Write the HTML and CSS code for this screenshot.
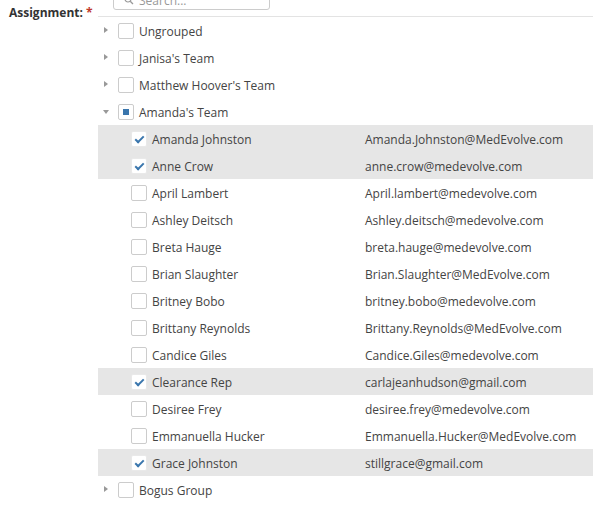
FILE: index.html
```html
<!DOCTYPE html>
<html lang="en">
<head>
    <meta charset="UTF-8">
    <title>Assignment</title>
    <link rel="stylesheet" href="styles.css">
</head>
<body>
<div class="field">
    <div class="field-label">Assignment: <span class="req">*</span></div>
    <div class="picker">
        <div class="search-wrap">
            <div class="search-box">
                <svg class="search-icon" width="10" height="10" viewBox="0 0 10 10"><circle cx="4" cy="4" r="3" fill="none" stroke="#999" stroke-width="1.2"/><path d="M6.2 6.2 L9 9" stroke="#999" stroke-width="1.3"/></svg>
                <span>Search...</span>
            </div>
        </div>
        <ul class="tree">
            <li class="group"><span class="arrow"></span><span class="check"></span><span class="name">Ungrouped</span></li>
            <li class="group"><span class="arrow"></span><span class="check"></span><span class="name">Janisa's Team</span></li>
            <li class="group"><span class="arrow"></span><span class="check"></span><span class="name">Matthew Hoover's Team</span></li>
            <li class="group open"><span class="arrow"></span><span class="check partial"></span><span class="name">Amanda's Team</span></li>
            <li class="member selected"><span class="check on"></span><span class="name">Amanda Johnston</span><span class="mail">Amanda.Johnston@MedEvolve.com</span></li>
            <li class="member selected"><span class="check on"></span><span class="name">Anne Crow</span><span class="mail">anne.crow@medevolve.com</span></li>
            <li class="member"><span class="check"></span><span class="name">April Lambert</span><span class="mail">April.lambert@medevolve.com</span></li>
            <li class="member"><span class="check"></span><span class="name">Ashley Deitsch</span><span class="mail">Ashley.deitsch@medevolve.com</span></li>
            <li class="member"><span class="check"></span><span class="name">Breta Hauge</span><span class="mail">breta.hauge@medevolve.com</span></li>
            <li class="member"><span class="check"></span><span class="name">Brian Slaughter</span><span class="mail">Brian.Slaughter@MedEvolve.com</span></li>
            <li class="member"><span class="check"></span><span class="name">Britney Bobo</span><span class="mail">britney.bobo@medevolve.com</span></li>
            <li class="member"><span class="check"></span><span class="name">Brittany Reynolds</span><span class="mail">Brittany.Reynolds@MedEvolve.com</span></li>
            <li class="member"><span class="check"></span><span class="name">Candice Giles</span><span class="mail">Candice.Giles@medevolve.com</span></li>
            <li class="member selected"><span class="check on"></span><span class="name">Clearance Rep</span><span class="mail">carlajeanhudson@gmail.com</span></li>
            <li class="member"><span class="check"></span><span class="name">Desiree Frey</span><span class="mail">desiree.frey@medevolve.com</span></li>
            <li class="member"><span class="check"></span><span class="name">Emmanuella Hucker</span><span class="mail">Emmanuella.Hucker@MedEvolve.com</span></li>
            <li class="member selected"><span class="check on"></span><span class="name">Grace Johnston</span><span class="mail">stillgrace@gmail.com</span></li>
            <li class="group"><span class="arrow"></span><span class="check"></span><span class="name">Bogus Group</span></li>
        </ul>
    </div>
</div>
</body>
</html>
```

FILE: styles.css
```css
body,ul,li{
    padding: 0;
    margin: 0;
}
ul{
    list-style: none;
}
body{
    font-family: "Open Sans", "Noto Sans", sans-serif;
    font-size: 12px;
    color: #444;
    background: #fff;
}
.field{
    display: flex;
}
.field-label{
    width: 98px;
    padding: 4px 0 0 9px;
    font-weight: bold;
    color: #333;
    box-sizing: border-box;
}
.req{
    color: #c0392b;
}
.picker{
    flex: 1;
}
.search-wrap{
    height: 16px;
    border-bottom: 1px solid #e3e3e3;
    padding-left: 15px;
    overflow: hidden;
}
.search-box{
    width: 157px;
    height: 20px;
    margin-top: -10px;
    border: 1px solid #ccc;
    border-radius: 3px;
    display: flex;
    align-items: center;
    gap: 5px;
    padding-left: 10px;
    box-sizing: border-box;
    color: #999;
}
.tree li{
    height: 27px;
    display: flex;
    align-items: center;
    padding-top: 1px;
    box-sizing: border-box;
}
.tree .selected{
    background: #e6e6e6;
}
.arrow{
    width: 20px;
    height: 26px;
    position: relative;
}
.arrow::after{
    content: "";
    position: absolute;
    left: 6px;
    top: 9px;
    border-left: 4px solid #999;
    border-top: 3px solid transparent;
    border-bottom: 3px solid transparent;
}
.open .arrow::after{
    left: 5px;
    top: 11px;
    border-top: 4px solid #999;
    border-left: 3px solid transparent;
    border-right: 3px solid transparent;
    border-bottom: none;
}
.check{
    width: 16px;
    height: 16px;
    margin-top: -1px;
    border: 1px solid #ccc;
    border-radius: 2px;
    background: #fff;
    box-sizing: border-box;
    position: relative;
    flex: none;
}
.member .check{
    margin-left: 33px;
}
.check.partial::after{
    content: "";
    position: absolute;
    left: 4px;
    top: 4px;
    width: 6px;
    height: 6px;
    background: #3a76ad;
}
.check.on{
    border-color: #e9e9e9;
}
.check.on::after{
    content: "";
    position: absolute;
    left: 5px;
    top: 2px;
    width: 3px;
    height: 7px;
    border-right: 2px solid #3a76ad;
    border-bottom: 2px solid #3a76ad;
    transform: rotate(45deg);
}
.name{
    padding-left: 5px;
    width: 213px;
}
.mail{
    white-space: nowrap;
}
```
